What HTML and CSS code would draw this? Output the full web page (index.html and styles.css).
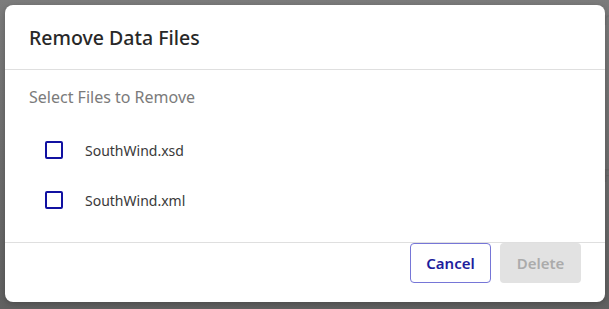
FILE: index.html
```html
<!DOCTYPE html>
<html lang="en">
<head>
  <meta charset="UTF-8">
  <title>Remove Data Files</title>
  <link rel="stylesheet" href="styles.css">
</head>
<body>
  <!-- page behind the overlay -->
  <div class="backdrop">
    <span class="peek peek-r">r</span>
    <span class="peek peek-f">F</span>
  </div>

  <div class="overlay">
    <div class="dialog">
      <div class="dialog-header">
        <h1>Remove Data Files</h1>
      </div>

      <div class="dialog-body">
        <div class="hint">Select Files to Remove</div>
        <label class="file-row">
          <input type="checkbox">
          <span class="box"></span>
          <span class="file-name">SouthWind.xsd</span>
        </label>
        <label class="file-row">
          <input type="checkbox">
          <span class="box"></span>
          <span class="file-name">SouthWind.xml</span>
        </label>
      </div>

      <div class="dialog-footer">
        <button class="btn btn-cancel">Cancel</button>
        <button class="btn btn-delete" disabled>Delete</button>
      </div>
    </div>
  </div>
</body>
</html>
```

FILE: styles.css
```css
body { margin: 0; font-family: "Noto Sans", "Open Sans", sans-serif; background: #fff; }

.backdrop { height: 309px; position: relative; }
.peek { position: absolute; left: 603px; color: #0d1b2a; font-size: 18px; }
.peek-r { top: 6px; }
.peek-f { top: 163px; color: #2a0d0d; }

.overlay { position: absolute; top: 0; left: 0; width: 609px; height: 309px; background: linear-gradient(#787878, #5c5c5c); opacity: 0.97; }

.dialog { margin: 5px; width: 600px; height: 297px; background: #fff; border-radius: 8px; display: flex; flex-direction: column; box-shadow: 0 2px 6px rgba(0, 0, 0, 0.25); }

.dialog-header { height: 64px; border-bottom: 1px solid #dedede; display: flex; align-items: center; padding: 0 24px; }
.dialog-header h1 { margin: 0; font-size: 19.5px; font-weight: 500; color: #222; }

.dialog-body { flex: 1; padding: 16px 24px 0; }
.hint { font-size: 16px; color: #777; height: 22px; line-height: 22px; margin-bottom: 17px; }

.file-row { display: flex; align-items: center; height: 50px; padding-left: 16px; cursor: pointer; }
.file-row input { display: none; }
.box { width: 14px; height: 14px; border: 2px solid #0a0a9e; border-radius: 2px; margin-right: 22px; }
.file-name { font-size: 14px; color: #333; }

.dialog-footer { border-top: 1px solid #dedede; display: flex; justify-content: flex-end; gap: 9px; padding: 0 24px 19px; }
.btn { width: 81px; height: 40px; border-radius: 4px; font-family: inherit; font-size: 15px; font-weight: 600; }
.btn-cancel { background: #fff; border: 1.5px solid #7272d6; color: #16169a; }
.btn-delete { background: #e2e2e2; border: none; color: #a9a9a9; }
```
